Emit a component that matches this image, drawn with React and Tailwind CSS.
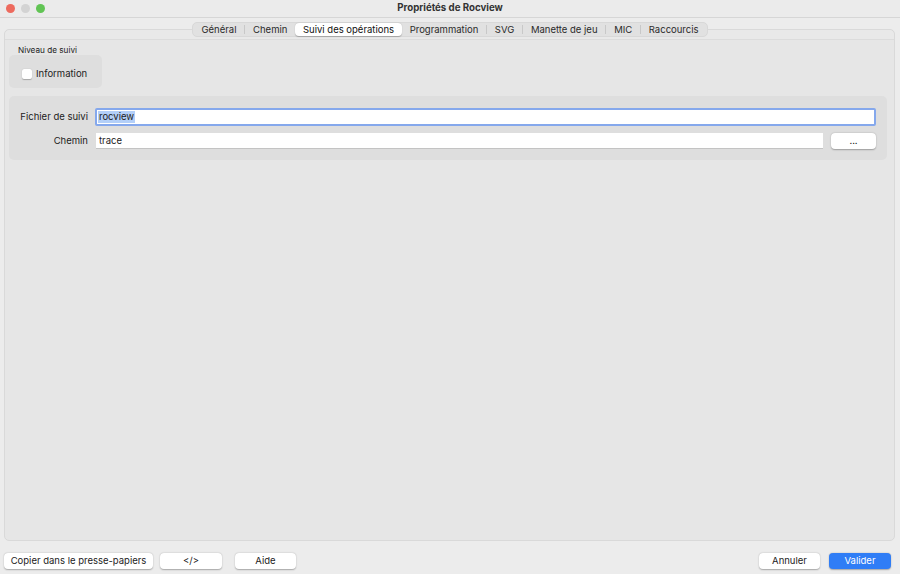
import React from "react";

const tabs = [
  "Général",
  "Chemin",
  "Suivi des opérations",
  "Programmation",
  "SVG",
  "Manette de jeu",
  "MIC",
  "Raccourcis",
];

const Btn = ({ children, className = "" }) => (
  <button
    className={`h-[16px] rounded-[4px] bg-white text-[9.5px] leading-none whitespace-nowrap text-[#222] shadow-[0_0.5px_1.5px_rgba(0,0,0,0.3)] ${className}`}
  >
    {children}
  </button>
);

const App = () => {
  return (
    <div
      className="w-[900px] h-[574px] bg-[#ececec] flex flex-col overflow-hidden text-[#222]"
      style={{ fontFamily: "Inter, 'Liberation Sans', sans-serif" }}
    >
      {/* title bar */}
      <div className="h-[18px] flex items-center border-b border-[#d6d6d6] bg-[#ebebeb] relative">
        <div className="flex gap-[6px] pl-[6px]">
          <span className="w-[9px] h-[9px] rounded-full bg-[#ed6a5e]" />
          <span className="w-[9px] h-[9px] rounded-full bg-[#d3d3d3]" />
          <span className="w-[9px] h-[9px] rounded-full bg-[#61c454]" />
        </div>
        <div className="absolute inset-0 flex items-center justify-center text-[9.7px] font-bold text-[#333]">
          Propriétés de Rocview
        </div>
      </div>

      {/* tabs */}
      <div className="flex justify-center pt-[4px] relative z-10">
        <div className="flex items-center h-[15px] rounded-[5px] bg-[#e1e1e1] border border-[#d8d8d8] px-[1px]">
          {tabs.map((t, i) => {
            const active = t === "Suivi des opérations";
            const nextActive = tabs[i + 1] === "Suivi des opérations";
            return (
              <React.Fragment key={t}>
                <div
                  className={`h-[13px] flex items-center px-[7.8px] text-[9.5px] leading-none rounded-[4px] ${
                    active ? "bg-white shadow-[0_0.5px_1px_rgba(0,0,0,0.25)] text-[#111]" : "text-[#2a2a2a]"
                  }`}
                >
                  {t}
                </div>
                {i < tabs.length - 1 && !active && !nextActive && (
                  <span className="w-px h-[9px] bg-[#c8c8c8]" />
                )}
              </React.Fragment>
            );
          })}
        </div>
      </div>

      {/* panel */}
      <div className="mx-[4px] mt-[-8px] h-[512px] w-[891px] rounded-[5px] border border-[#d9d9d9] bg-[#e6e6e6] flex flex-col">
        <div className="h-[10px] border-b border-[#dcdcdc] bg-[#e9e9e9] rounded-t-[5px]" />
        <div className="px-[4px] pt-[5px]">
          <div className="pl-[9px] text-[8.2px] leading-[10px] text-[#222]">Niveau de suivi</div>
          <div className="mt-[0px] w-[93px] h-[33px] rounded-[5px] bg-[#dedede] flex items-center pl-[13px] gap-[4px] pt-[4px]">
            <span className="w-[10px] h-[10px] rounded-[2px] bg-white shadow-[0_0.5px_1px_rgba(0,0,0,0.25)]" />
            <span className="text-[9.5px] leading-none">Information</span>
          </div>

          <div className="mt-[8px] w-[878px] h-[64px] rounded-[5px] bg-[#dedede] flex flex-col pt-[12px]">
            <div className="flex items-center h-[18px]">
              <div className="w-[79px] text-right text-[9.5px] leading-none">Fichier de suivi</div>
              <div className="ml-[7px] w-[781px] h-[18px] bg-white rounded-[2px] border-[2px] border-[#85a8ec] flex items-center pl-[1px]">
                <span className="bg-[#b3cff8] text-[9.5px] leading-[12px] px-[1px]">rocview</span>
              </div>
            </div>
            <div className="flex items-center h-[15px] mt-[7px]">
              <div className="w-[79px] text-right text-[9.5px] leading-none">Chemin</div>
              <div className="ml-[8px] w-[727px] h-[15px] bg-white shadow-[0_1px_0_rgba(0,0,0,0.12)] flex items-center pl-[3px] text-[9.5px] leading-none">
                trace
              </div>
              <Btn className="ml-[8px] w-[45px] h-[14px]">...</Btn>
            </div>
          </div>
        </div>
      </div>

      {/* bottom buttons */}
      <div className="flex items-center px-[4px] mt-[12px]">
        <Btn className="w-[149px]">Copier dans le presse-papiers</Btn>
        <Btn className="ml-[7px] w-[62px]">&lt;/&gt;</Btn>
        <Btn className="ml-[13px] w-[61px]">Aide</Btn>
        <div className="flex-1" />
        <Btn className="w-[61px]">Annuler</Btn>
        <button className="ml-[9px] mr-[5px] w-[62px] h-[16px] rounded-[4px] bg-[#2f7df6] text-white text-[9.5px] leading-none shadow-[0_0.5px_1.5px_rgba(0,0,0,0.3)]">
          Valider
        </button>
      </div>
    </div>
  );
};

export default App;
